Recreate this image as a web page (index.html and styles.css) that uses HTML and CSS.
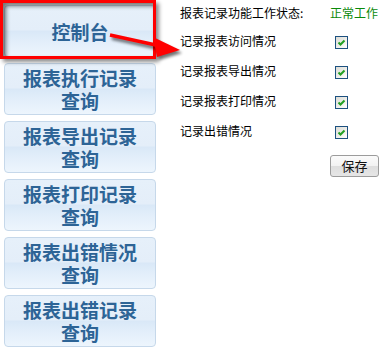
FILE: index.html
```html
<!DOCTYPE html>
<html lang="zh">
<head>
<meta charset="utf-8">
<title>报表记录</title>
<link rel="stylesheet" href="styles.css">
</head>
<body>
<div class="page">
  <nav class="menu">
    <a class="menu-btn single">控制台</a>
    <a class="menu-btn">报表执行记录<br>查询</a>
    <a class="menu-btn">报表导出记录<br>查询</a>
    <a class="menu-btn">报表打印记录<br>查询</a>
    <a class="menu-btn">报表出错情况<br>查询</a>
    <a class="menu-btn">报表出错记录<br>查询</a>
  </nav>
  <section class="settings">
    <div class="grid">
      <span class="label first">报表记录功能工作状态:</span>
      <span class="status first">正常工作</span>
      <span class="label">记录报表访问情况</span>
      <span class="cell"><span class="check"><svg viewBox="0 0 11 11" width="11" height="11"><path d="M2.5 5.5 L4.5 7.5 L8.5 3.5" fill="none" stroke="#22a022" stroke-width="2"/></svg></span></span>
      <span class="label">记录报表导出情况</span>
      <span class="cell"><span class="check"><svg viewBox="0 0 11 11" width="11" height="11"><path d="M2.5 5.5 L4.5 7.5 L8.5 3.5" fill="none" stroke="#22a022" stroke-width="2"/></svg></span></span>
      <span class="label">记录报表打印情况</span>
      <span class="cell"><span class="check"><svg viewBox="0 0 11 11" width="11" height="11"><path d="M2.5 5.5 L4.5 7.5 L8.5 3.5" fill="none" stroke="#22a022" stroke-width="2"/></svg></span></span>
      <span class="label">记录出错情况</span>
      <span class="cell"><span class="check"><svg viewBox="0 0 11 11" width="11" height="11"><path d="M2.5 5.5 L4.5 7.5 L8.5 3.5" fill="none" stroke="#22a022" stroke-width="2"/></svg></span></span>
      <span></span>
      <span class="cell save-cell"><button class="save">保存</button></span>
    </div>
  </section>
  <div class="highlight"></div>
  <svg class="arrow" width="392" height="351" viewBox="0 0 392 351">
    <defs>
      <filter id="sh" x="-20%" y="-50%" width="140%" height="200%">
        <feGaussianBlur stdDeviation="1.6"/>
      </filter>
    </defs>
    <g transform="translate(2,3)" opacity="0.55" filter="url(#sh)">
      <line x1="110" y1="35" x2="158" y2="45.5" stroke="#000" stroke-width="3.5"/>
      <polygon points="153,37 157,57 180,50" fill="#000"/>
    </g>
    <line x1="110" y1="35" x2="158" y2="45.5" stroke="#f00" stroke-width="3.5"/>
    <polygon points="153,37 157,57 180,50" fill="#f00"/>
  </svg>
</div>
</body>
</html>
```
FILE: styles.css
```css
html, body {
  margin: 0;
  padding: 0;
  background: #ffffff;
}
.page {
  position: relative;
  width: 392px;
  height: 351px;
  display: flex;
  overflow: hidden;
  font-family: "Noto Sans CJK SC", "Liberation Sans", sans-serif;
}
.menu {
  display: flex;
  flex-direction: column;
  gap: 6px;
  padding: 5px 0 0 4px;
  width: 152px;
}
.menu-btn {
  box-sizing: border-box;
  width: 152px;
  height: 52px;
  border: 1px solid #c6d8ea;
  border-radius: 4px;
  background: linear-gradient(to bottom, #e6f0fa 0%, #e4eef9 48%, #d9e8f7 50%, #e2eefa 70%, #edf5fd 100%);
  color: #2d6496;
  font-size: 19px;
  font-weight: 700;
  line-height: 23px;
  text-align: center;
  display: flex;
  align-items: center;
  justify-content: center;
  text-decoration: none;
}
.settings {
  padding-left: 24px;
  font-size: 12px;
  color: #000;
}
.grid {
  display: grid;
  grid-template-columns: 150px auto;
  grid-template-rows: 26px 30px 30px 30px 30px 31px;
  align-items: center;
}
.label {
  line-height: 16px;
  white-space: nowrap;
}
.status {
  color: #0a8a0a;
  line-height: 16px;
  white-space: nowrap;
}
.cell {
  display: flex;
  align-items: center;
  padding-left: 5px;
}
.check {
  box-sizing: border-box;
  width: 13px;
  height: 13px;
  margin-top: 3px;
  border: 1px solid #1d5180;
  background: linear-gradient(135deg, #dcdcd6 0%, #f4f4f0 70%, #ffffff 100%);
  display: flex;
}
.save-cell {
  align-self: end;
  padding-left: 0;
}
.save {
  box-sizing: border-box;
  width: 49px;
  height: 22px;
  padding: 0;
  border: 1px solid #9c9c9c;
  border-radius: 3px;
  background: linear-gradient(to bottom, #fbfbfb 0%, #f2f2f2 50%, #dedede 52%, #e6e6e6 100%);
  font-family: "Noto Sans CJK SC", "Liberation Sans", sans-serif;
  font-size: 13px;
  line-height: 18px;
  color: #111;
}
.highlight {
  position: absolute;
  left: 0;
  top: 0;
  width: 156px;
  height: 59px;
  box-sizing: border-box;
  border: 3px solid #ff0000;
  box-shadow: 3px 3px 4px rgba(0, 0, 0, 0.45), inset 3px 3px 4px rgba(0, 0, 0, 0.55);
}
.arrow {
  position: absolute;
  left: 0;
  top: 0;
  pointer-events: none;
}
```
